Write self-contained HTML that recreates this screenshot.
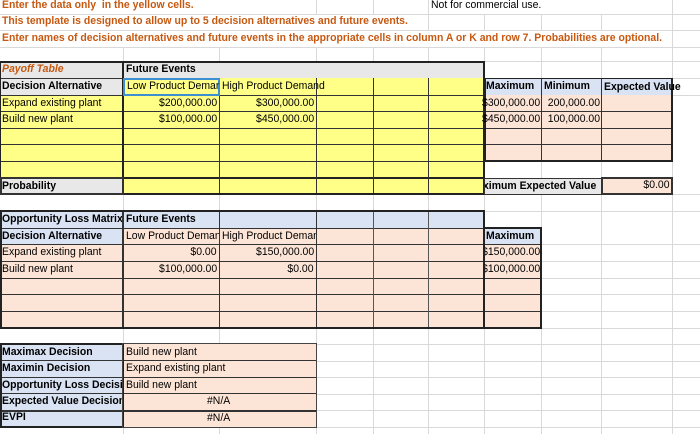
<!DOCTYPE html>
<html><head><meta charset="utf-8"><style>
body{margin:0;width:700px;height:434px;background:#fff;position:relative;overflow:hidden;font-family:"Liberation Sans",sans-serif}
.g{position:absolute;background:#d9d9d9}
.b{position:absolute;box-sizing:border-box}
.t{position:absolute;font-size:11px;line-height:16px;white-space:nowrap;transform:scaleX(.95);transform-origin:0 0;color:#000}
.r{transform-origin:100% 0;text-align:right}
.o{color:#c65911}
.bd{font-weight:bold}
.Y{background:#ffff88}.P{background:#fce4d6}.B{background:#dae3f3}.G{background:#e8e8e8}
.k{border:1px solid #333}
.clip{position:absolute;overflow:hidden;height:16px}
.clip .t{top:0;left:2px}
</style></head><body>
<!-- gridlines top section -->
<div class="g" style="left:0;top:14px;width:700px;height:1px"></div>
<div class="g" style="left:0;top:30px;width:700px;height:1px"></div>
<div class="g" style="left:0;top:47px;width:700px;height:1px"></div>
<div class="g" style="left:123px;top:47px;width:1px;height:14px"></div>
<div class="g" style="left:219px;top:47px;width:1px;height:14px"></div>
<div class="g" style="left:316px;top:0;width:1px;height:14px"></div>
<div class="g" style="left:316px;top:47px;width:1px;height:14px"></div>
<div class="g" style="left:373px;top:0;width:1px;height:14px"></div>
<div class="g" style="left:373px;top:47px;width:1px;height:14px"></div>
<div class="g" style="left:428px;top:0;width:1px;height:30px"></div>
<div class="g" style="left:428px;top:47px;width:1px;height:14px"></div>
<div class="g" style="left:484px;top:14px;width:1px;height:16px"></div>
<div class="g" style="left:484px;top:47px;width:1px;height:14px"></div>
<div class="g" style="left:541px;top:14px;width:1px;height:16px"></div>
<div class="g" style="left:541px;top:47px;width:1px;height:14px"></div>
<div class="g" style="left:601px;top:14px;width:1px;height:16px"></div>
<div class="g" style="left:601px;top:47px;width:1px;height:14px"></div>
<div class="g" style="left:672px;top:0;width:1px;height:61px"></div>
<div class="g" style="left:0;top:61px;width:700px;height:1px"></div>
<!-- lower grid -->
<div class="g" style="left:123px;top:61px;width:1px;height:373px"></div>
<div class="g" style="left:219px;top:61px;width:1px;height:373px"></div>
<div class="g" style="left:316px;top:61px;width:1px;height:373px"></div>
<div class="g" style="left:373px;top:61px;width:1px;height:373px"></div>
<div class="g" style="left:428px;top:61px;width:1px;height:373px"></div>
<div class="g" style="left:484px;top:61px;width:1px;height:373px"></div>
<div class="g" style="left:541px;top:61px;width:1px;height:373px"></div>
<div class="g" style="left:601px;top:61px;width:1px;height:373px"></div>
<div class="g" style="left:672px;top:61px;width:1px;height:373px"></div>
<div class="g" style="left:0;top:194px;width:700px;height:1px"></div>
<div class="g" style="left:0;top:211px;width:700px;height:1px"></div>
<div class="g" style="left:484px;top:244px;width:216px;height:1px"></div>
<div class="g" style="left:484px;top:261px;width:216px;height:1px"></div>
<div class="g" style="left:484px;top:278px;width:216px;height:1px"></div>
<div class="g" style="left:484px;top:294px;width:216px;height:1px"></div>
<div class="g" style="left:484px;top:311px;width:216px;height:1px"></div>
<div class="g" style="left:0;top:328px;width:700px;height:1px"></div>
<div class="g" style="left:0;top:344px;width:700px;height:1px"></div>
<div class="g" style="left:316px;top:361px;width:384px;height:1px"></div>
<div class="g" style="left:316px;top:377px;width:384px;height:1px"></div>
<div class="g" style="left:316px;top:394px;width:384px;height:1px"></div>
<div class="g" style="left:316px;top:410px;width:384px;height:1px"></div>
<div class="g" style="left:0;top:427px;width:700px;height:1px"></div>
<div class="g" style="left:484px;top:95px;width:216px;height:1px"></div>
<div class="g" style="left:484px;top:78px;width:216px;height:1px"></div>

<!-- top text -->
<div class="t o bd" style="left:2px;top:-3px">Enter the data only&nbsp; in the yellow cells.</div>
<div class="t" style="left:431px;top:-3px">Not for commercial use.</div>
<div class="t o bd" style="left:2px;top:13px">This template is designed to allow up to 5 decision alternatives and future events.</div>
<div class="t o bd" style="left:2px;top:30px">Enter names of decision alternatives and future events in the appropriate cells in column A or K and row 7. Probabilities are optional.</div>

<!-- PAYOFF -->
<div class="b G k" style="left:0;top:61px;width:124px;height:18px"></div>
<div class="b G k" style="left:123px;top:61px;width:362px;height:18px"></div>
<div class="b G k" style="left:0;top:78px;width:124px;height:18px"></div>
<div class="b Y" style="left:123px;top:78px;width:362px;height:117px"></div>
<div class="b Y" style="left:0;top:95px;width:124px;height:84px"></div>
<div class="b" style="left:0;top:95px;width:485px;height:1px;background:#333"></div>
<div class="b" style="left:0;top:111px;width:485px;height:1px;background:#333"></div>
<div class="b" style="left:0;top:128px;width:485px;height:1px;background:#333"></div>
<div class="b" style="left:0;top:144px;width:485px;height:1px;background:#333"></div>
<div class="b" style="left:0;top:161px;width:485px;height:1px;background:#333"></div>
<div class="b" style="left:0;top:177px;width:485px;height:2px;background:#222"></div>
<div class="b" style="left:122px;top:61px;width:2px;height:134px;background:#222"></div>
<div class="b" style="left:219px;top:78px;width:1px;height:117px;background:#333"></div>
<div class="b" style="left:316px;top:78px;width:1px;height:117px;background:#333"></div>
<div class="b" style="left:373px;top:78px;width:1px;height:117px;background:#333"></div>
<div class="b" style="left:428px;top:78px;width:1px;height:117px;background:#333"></div>
<div class="b" style="left:483px;top:61px;width:2px;height:134px;background:#222"></div>
<div class="b" style="left:0;top:61px;width:485px;height:134px;border:1px solid #222;border-top-width:2px;border-bottom-width:2px"></div>
<div class="b G k" style="left:0;top:177px;width:124px;height:18px;border-width:2px"></div>
<div class="b" style="left:123px;top:78px;width:97px;height:18px;border:2px solid #3c8fd0"></div>

<div class="t o bd" style="left:2px;top:61px;font-style:italic">Payoff Table</div>
<div class="t bd" style="left:126px;top:61px">Future Events</div>
<div class="t bd" style="left:2px;top:78px">Decision Alternative</div>
<div class="clip" style="left:125px;top:78px;width:94px"><div class="t">Low Product Demand</div></div>
<div class="t" style="left:222px;top:78px">High Product Demand</div>
<div class="t" style="left:2px;top:95px">Expand existing plant</div>
<div class="t" style="left:2px;top:111px">Build new plant</div>
<div class="t bd" style="left:2px;top:178px">Probability</div>
<div class="t r" style="right:483px;top:95px">$200,000.00</div>
<div class="t r" style="right:483px;top:111px">$100,000.00</div>
<div class="t r" style="right:386px;top:95px">$300,000.00</div>
<div class="t r" style="right:386px;top:111px">$450,000.00</div>

<!-- max/min/EV -->
<div class="b B k" style="left:484px;top:78px;width:118px;height:18px"></div>
<div class="b B k" style="left:601px;top:78px;width:72px;height:18px"></div>
<div class="b P" style="left:484px;top:95px;width:189px;height:67px"></div>
<div class="b" style="left:484px;top:111px;width:189px;height:1px;background:#333"></div>
<div class="b" style="left:484px;top:128px;width:189px;height:1px;background:#333"></div>
<div class="b" style="left:484px;top:144px;width:189px;height:1px;background:#333"></div>
<div class="b" style="left:541px;top:78px;width:1px;height:84px;background:#333"></div>
<div class="b" style="left:601px;top:78px;width:1px;height:84px;background:#333"></div>
<div class="b" style="left:484px;top:78px;width:189px;height:84px;border:1px solid #222;border-width:1px 2px 2px 2px"></div>
<div class="b G k" style="left:484px;top:178px;width:118px;height:17px"></div>
<div class="b P k" style="left:601px;top:177px;width:72px;height:18px;border-width:2px"></div>
<div class="t bd" style="left:486px;top:78px">Maximum</div>
<div class="t bd" style="left:544px;top:78px">Minimum</div>
<div class="t bd" style="left:604px;top:79px">Expected Value</div>
<div class="t r" style="right:160px;top:95px">$300,000.00</div>
<div class="t r" style="right:160px;top:111px">$450,000.00</div>
<div class="t r" style="right:100px;top:95px">200,000.00</div>
<div class="t r" style="right:100px;top:111px">100,000.00</div>
<div class="clip" style="left:485px;top:178px;width:116px"><div class="t bd" style="left:-2px">ximum Expected Value</div></div>
<div class="t r" style="right:30px;top:177px">$0.00</div>

<!-- OPPORTUNITY LOSS -->
<div class="b B" style="left:0;top:211px;width:485px;height:34px"></div>
<div class="b P" style="left:123px;top:228px;width:362px;height:17px"></div>
<div class="b P" style="left:0;top:244px;width:485px;height:85px"></div>
<div class="b" style="left:0;top:211px;width:485px;height:1px;background:#333"></div>
<div class="b" style="left:0;top:228px;width:485px;height:1px;background:#333"></div>
<div class="b" style="left:0;top:244px;width:485px;height:1px;background:#333"></div>
<div class="b" style="left:0;top:261px;width:485px;height:1px;background:#333"></div>
<div class="b" style="left:0;top:278px;width:485px;height:1px;background:#333"></div>
<div class="b" style="left:0;top:294px;width:485px;height:1px;background:#333"></div>
<div class="b" style="left:0;top:311px;width:485px;height:1px;background:#333"></div>
<div class="b" style="left:122px;top:211px;width:2px;height:118px;background:#333"></div>
<div class="b" style="left:219px;top:211px;width:1px;height:118px;background:#333"></div>
<div class="b" style="left:316px;top:211px;width:1px;height:118px;background:#333"></div>
<div class="b" style="left:373px;top:211px;width:1px;height:118px;background:#555"></div>
<div class="b" style="left:428px;top:211px;width:1px;height:118px;background:#555"></div>
<div class="b" style="left:0;top:210px;width:485px;height:119px;border:2px solid #222"></div>
<div class="b B" style="left:484px;top:228px;width:58px;height:17px"></div>
<div class="b P" style="left:484px;top:244px;width:58px;height:85px"></div>
<div class="b" style="left:484px;top:244px;width:58px;height:1px;background:#333"></div>
<div class="b" style="left:484px;top:261px;width:58px;height:1px;background:#333"></div>
<div class="b" style="left:484px;top:278px;width:58px;height:1px;background:#333"></div>
<div class="b" style="left:484px;top:294px;width:58px;height:1px;background:#333"></div>
<div class="b" style="left:484px;top:311px;width:58px;height:1px;background:#333"></div>
<div class="b" style="left:483px;top:227px;width:59px;height:102px;border:2px solid #222"></div>
<div class="clip" style="left:0;top:211px;width:122px"><div class="t bd">Opportunity Loss Matrix</div></div>
<div class="t bd" style="left:126px;top:211px">Future Events</div>
<div class="t bd" style="left:2px;top:228px">Decision Alternative</div>
<div class="clip" style="left:124px;top:228px;width:95px"><div class="t">Low Product Demand</div></div>
<div class="clip" style="left:220px;top:228px;width:96px"><div class="t">High Product Demand</div></div>
<div class="t" style="left:2px;top:244px">Expand existing plant</div>
<div class="t" style="left:2px;top:261px">Build new plant</div>
<div class="t r" style="right:483px;top:244px">$0.00</div>
<div class="t r" style="right:483px;top:261px">$100,000.00</div>
<div class="t r" style="right:386px;top:244px">$150,000.00</div>
<div class="t r" style="right:386px;top:261px">$0.00</div>
<div class="t bd" style="left:486px;top:228px">Maximum</div>
<div class="clip" style="left:485px;top:244px;width:55px"><div class="t r" style="left:auto;right:0">$150,000.00</div></div>
<div class="clip" style="left:485px;top:261px;width:55px"><div class="t r" style="left:auto;right:0">$100,000.00</div></div>

<!-- DECISIONS -->
<div class="b B" style="left:0;top:344px;width:124px;height:84px"></div>
<div class="b P" style="left:123px;top:344px;width:194px;height:84px"></div>
<div class="b" style="left:0;top:360px;width:317px;height:1px;background:#333"></div>
<div class="b" style="left:0;top:377px;width:317px;height:1px;background:#333"></div>
<div class="b" style="left:0;top:393px;width:317px;height:1px;background:#333"></div>
<div class="b" style="left:0;top:410px;width:317px;height:2px;background:#333"></div>
<div class="b" style="left:122px;top:344px;width:2px;height:84px;background:#333"></div>
<div class="b" style="left:0;top:343px;width:124px;height:85px;border:2px solid #222"></div>
<div class="b" style="left:122px;top:343px;width:195px;height:85px;border:1px solid #444"></div>
<div class="clip" style="left:0;top:344px;width:122px"><div class="t bd">Maximax Decision</div></div>
<div class="clip" style="left:0;top:360px;width:122px"><div class="t bd">Maximin Decision</div></div>
<div class="clip" style="left:0;top:377px;width:122px"><div class="t bd">Opportunity Loss Decision</div></div>
<div class="clip" style="left:0;top:393px;width:122px"><div class="t bd">Expected Value Decision</div></div>
<div class="clip" style="left:0;top:409px;width:122px"><div class="t bd">EVPI</div></div>
<div class="t" style="left:126px;top:344px">Build new plant</div>
<div class="t" style="left:126px;top:360px">Expand existing plant</div>
<div class="t" style="left:126px;top:377px">Build new plant</div>
<div class="t" style="left:207px;top:393px">#N/A</div>
<div class="t" style="left:207px;top:410px">#N/A</div>
</body></html>
